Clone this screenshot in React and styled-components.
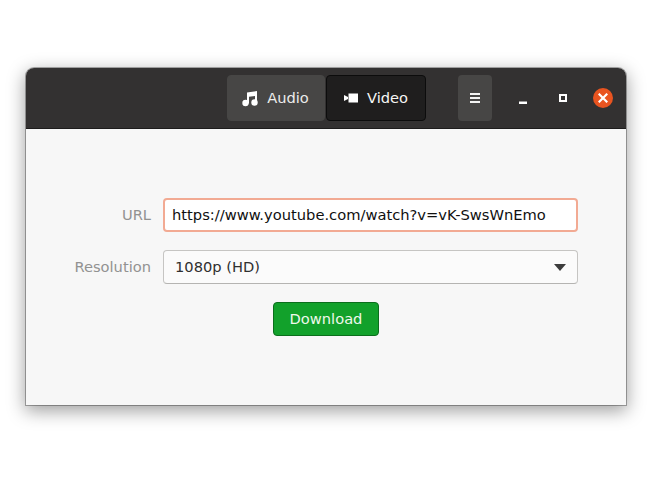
import React from "react";
import styled, { createGlobalStyle } from "styled-components";

const Global = createGlobalStyle`
  html, body { margin: 0; padding: 0; background: #fff; }
  body { font-family: "DejaVu Sans", sans-serif; font-size: 14.67px; }
`;
const Page = styled.div`
  width: 652px; height: 480px; box-sizing: border-box; padding: 68px 26px 0; overflow: hidden;
`;
const Window = styled.div`
  width: 600px; height: 337px; display: flex; flex-direction: column; overflow: hidden;
  border-radius: 8px 8px 0 0; background: #f7f7f7;
  box-shadow: 0 0 0 1px rgba(0,0,0,.3), 0 5px 18px 1px rgba(0,0,0,.38);
  position: relative;
`;
const Header = styled.header`
  flex: none; background: #333131; border-bottom: 1px solid #1d1c1c;
  display: flex; align-items: flex-start; padding-top: 7px; height: 53px;
`;
const Switcher = styled.div`
  display: flex; margin-left: 201px; gap: 1px;
`;
const ModeButton = styled.div`
  width: ${p => p.$w}px; height: 46px; box-sizing: border-box; display: flex; align-items: center; justify-content: center; gap: ${p => p.$gap}px;
  border-radius: 4px; color: ${p => p.$active ? "#f6f6f5" : "#ececeb"};
  background: ${p => p.$active ? "#1f1e1e" : "#474645"};
  border: 1px solid ${p => p.$active ? "#0c0c0c" : "#474645"};
`;
const ModeText = styled.span`
  padding-bottom: 1px;
`;
const MenuButton = styled.div`
  width: 34px; height: 46px; margin-left: 32px; border-radius: 4px; background: #474645;
  display: flex; align-items: center; justify-content: center;
`;
const WindowControls = styled.div`
  display: flex; align-items: center; height: 46px; margin-left: 11px;
`;
const ControlSlot = styled.div`
  width: 40px; height: 46px; display: flex; align-items: center; justify-content: center;
`;
const Close = styled.div`
  width: 20px; height: 20px; border-radius: 50%; background: #e95420; display: flex; align-items: center; justify-content: center;
`;
const Form = styled.main`
  flex: 1; display: flex; flex-direction: column; padding-top: 69px; gap: 18px; align-items: stretch;
`;
const Row = styled.div`
  display: flex; align-items: center; padding-left: 26px; gap: 12px;
`;
const Label = styled.label`
  width: 99px; text-align: right; color: #929291; white-space: nowrap; padding-bottom: 1px;
`;
const UrlField = styled.div`
  width: 415px; height: 34px; box-sizing: border-box; padding: 0 0 1px 7px; display: flex; align-items: center;
  background: #fff; border: 2px solid #f2aa93; border-radius: 4px; color: #101010; white-space: nowrap; font-size: 14.7px;
`;
const Select = styled.div`
  width: 415px; height: 34px; box-sizing: border-box; padding: 0 11px 0 11px; display: flex; align-items: center; justify-content: space-between;
  background: #fbfbfb; border: 1px solid #c6c5c3; border-bottom-color: #b5b4b2; border-radius: 4px; color: #303030;
`;
const SelectText = styled.span`
  padding-bottom: 1px;
`;
const Caret = styled.div`
  width: 0; height: 0; border-left: 6.5px solid transparent; border-right: 6.5px solid transparent; border-top: 7px solid #3c3c3c;
`;
const ButtonRow = styled.div`
  display: flex; justify-content: center;
`;
const Download = styled.button`
  width: 106px; height: 34px; padding: 0 0 2px; font: inherit; color: #eff8ec; background: #12a12b;
  border: 1px solid #0b6e1c; border-radius: 4px;
`;

const Music = () => (
  <svg width="16" height="15" viewBox="1 0 16 15" fill="#ffffff" style={{ overflow: "visible" }}>
    <path d="M5 1.500 15 0v11.500h-2V5L7 5.800V12.500H5z" />
    <circle cx="3.500" cy="12" r="3.200" />
    <circle cx="12.500" cy="11.500" r="3.200" />
  </svg>
);
const Camera = () => (
  <svg width="14" height="10" viewBox="0 0 14 10" fill="#ffffff">
    <path d="M4.500 0.500h9.500v9H4.500z" />
    <path d="M0 2 4 4v2L0 8z" />
  </svg>
);
const Burger = () => (
  <svg width="10" height="10" viewBox="0 0 10 10" fill="#f4f4f3">
    <path d="M0 0h10v2H0zM0 4h10v2H0zM0 8h10v2H0z" />
  </svg>
);
const Minimize = () => (
  <svg width="8" height="8" viewBox="0 0 8 8" fill="#fff" style={{ transform: "translateY(2px)" }}>
    <path d="M0 5.500h8V8H0z" />
  </svg>
);
const Maximize = () => (
  <svg width="8" height="8" viewBox="0 0 8 8" fill="none" stroke="#fff" strokeWidth="2">
    <rect x="1" y="1" width="6" height="6" />
  </svg>
);
const X = () => (
  <svg width="10" height="10" viewBox="0 0 10 10" stroke="#fff" strokeWidth="2.200" strokeLinecap="square">
    <path d="M1.500 1.500l7 7M8.500 1.500l-7 7" />
  </svg>
);

export default function App() {
  return (
    <Page>
      <Global />
      <Window>
        <Header>
          <Switcher>
            <ModeButton $w={98} $gap={8}><Music /><ModeText>Audio</ModeText></ModeButton>
            <ModeButton $w={100} $gap={9} $active><Camera /><ModeText>Video</ModeText></ModeButton>
          </Switcher>
          <MenuButton><Burger /></MenuButton>
          <WindowControls>
            <ControlSlot><Minimize /></ControlSlot>
            <ControlSlot><Maximize /></ControlSlot>
            <ControlSlot><Close><X /></Close></ControlSlot>
          </WindowControls>
        </Header>
        <Form>
          <Row>
            <Label>URL</Label>
            <UrlField>https://www.youtube.com/watch?v=vK-SwsWnEmo</UrlField>
          </Row>
          <Row>
            <Label>Resolution</Label>
            <Select><SelectText>1080p (HD)</SelectText><Caret /></Select>
          </Row>
          <ButtonRow><Download>Download</Download></ButtonRow>
        </Form>
      </Window>
    </Page>
  );
}
